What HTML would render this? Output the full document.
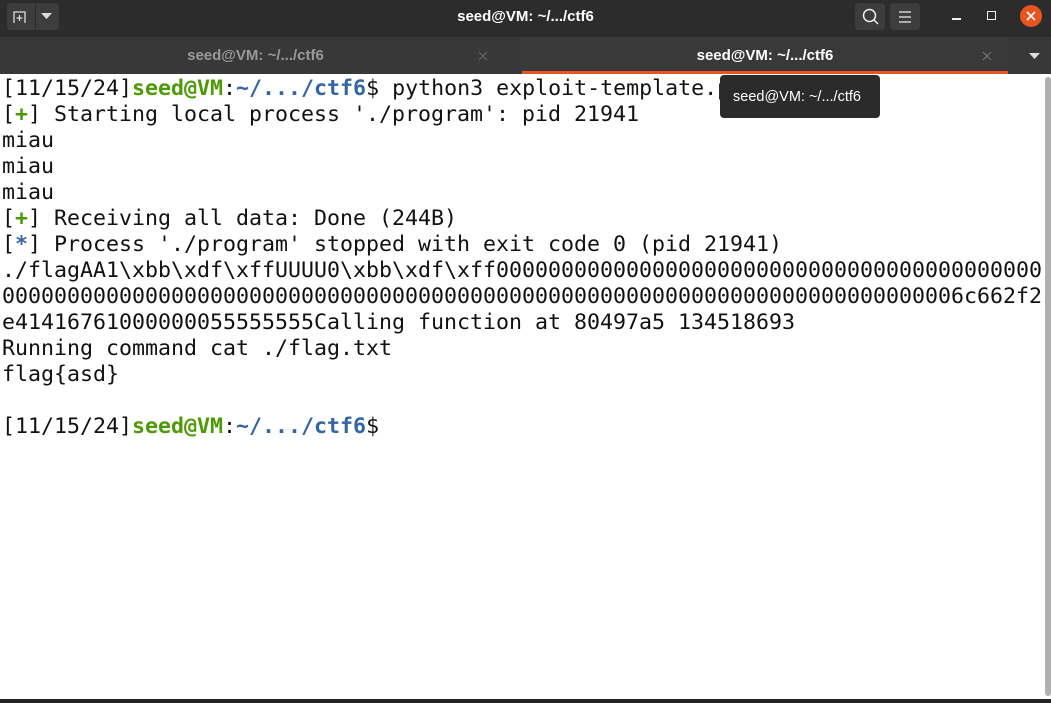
<!DOCTYPE html>
<html><head><meta charset="utf-8"><style>
*{margin:0;padding:0;box-sizing:border-box}
body{width:1051px;height:703px;overflow:hidden;background:#fff;position:relative;font-family:"Liberation Sans",sans-serif}
#title{position:absolute;left:0;top:0;width:1051px;height:37px;background:#2c2c2c}
#tabs{position:absolute;left:0;top:37px;width:1051px;height:37px;background:#383838}
.btn{position:absolute;top:3px;height:27px;background:#3d3d3d;border-radius:4px}
.tt{position:absolute;color:#fff;font-weight:bold;font-size:15px}
#term{position:absolute;left:2px;top:76px;font-family:"DejaVu Sans Mono",monospace;font-size:21.6px;line-height:26px;white-space:pre;color:#111}
.g{color:#4e9a06;font-weight:bold}.b{color:#3465a4;font-weight:bold}
</style></head><body>
<div id="title">
<div class="btn" style="left:7px;width:52px"></div>
<div style="position:absolute;left:35px;top:3px;width:1px;height:27px;background:#2c2c2c"></div>
<svg style="position:absolute;left:12px;top:8px" width="18" height="18"><path d="M2 15V4h11v11" stroke="#ddd" fill="none" stroke-width="1.3"/><path d="M7.5 7v6M4.5 10h6" stroke="#ddd" stroke-width="1.3"/></svg>
<svg style="position:absolute;left:41px;top:12px" width="12" height="8"><path d="M0 1h11L5.5 7z" fill="#ddd"/></svg>
<div class="tt" style="left:0;width:1051px;text-align:center;top:8px">seed@VM: ~/.../ctf6</div>
<div class="btn" style="left:855px;width:30px"></div>
<svg style="position:absolute;left:861px;top:7px" width="20" height="20"><circle cx="8.5" cy="8.5" r="6" stroke="#eee" fill="none" stroke-width="1.5"/><path d="M13 13l4 4" stroke="#eee" stroke-width="1.5"/></svg>
<div class="btn" style="left:890px;width:30px"></div>
<svg style="position:absolute;left:897px;top:9px" width="16" height="16"><path d="M2 3h12M2 8h12M2 13h12" stroke="#eee" stroke-width="1.3"/></svg>
<div style="position:absolute;left:952px;top:18px;width:9px;height:1.5px;background:#eee"></div>
<div style="position:absolute;left:987px;top:11px;width:9px;height:9px;border:1.5px solid #eee"></div>
<div style="position:absolute;left:1020px;top:5px;width:22px;height:22px;border-radius:50%;background:#e95420"></div>
<svg style="position:absolute;left:1025px;top:10px" width="12" height="12"><path d="M2 2l8 8M10 2l-8 8" stroke="#fff" stroke-width="1.6"/></svg>
</div>
<div id="tabs">
<div class="tt" style="left:0;width:511px;text-align:center;top:10px;color:#999">seed@VM: ~/.../ctf6</div>
<svg style="position:absolute;left:478px;top:14px" width="10" height="10"><path d="M1 1l8 8M9 1l-8 8" stroke="#666" stroke-width="1.2"/></svg>
<div style="position:absolute;left:522px;top:0;width:486px;height:37px;background:#393939"></div>
<div class="tt" style="left:522px;width:486px;text-align:center;top:10px">seed@VM: ~/.../ctf6</div>
<svg style="position:absolute;left:982px;top:14px" width="10" height="10"><path d="M1 1l8 8M9 1l-8 8" stroke="#777" stroke-width="1.2"/></svg>
<svg style="position:absolute;left:1029px;top:15px" width="12" height="8"><path d="M0 1h11L5.5 7z" fill="#ddd"/></svg>
<div style="position:absolute;left:522px;top:34px;width:486px;height:3px;background:#e95420"></div>
</div>
<div id="term"><span>[11/15/24]</span><span class="g">seed@VM</span>:<span class="b">~/.../ctf6</span>$ python3 exploit-template.py
[<span class="g">+</span>] Starting local process './program': pid 21941
miau
miau
miau
[<span class="g">+</span>] Receiving all data: Done (244B)
[<span class="b">*</span>] Process './program' stopped with exit code 0 (pid 21941)
./flagAA1\xbb\xdf\xffUUUU0\xbb\xdf\xff000000000000000000000000000000000000000000
00000000000000000000000000000000000000000000000000000000000000000000000006c662f2
e41416761000000055555555Calling function at 80497a5 134518693
Running command cat ./flag.txt
flag{asd}

[11/15/24]<span class="g">seed@VM</span>:<span class="b">~/.../ctf6</span>$</div>
<div style="position:absolute;left:720px;top:75px;width:160px;height:43px;background:#2b2b2b;border-radius:4px;color:#fff;font-size:14.5px;padding:14px 0 0 13px">seed@VM: ~/.../ctf6</div>
<div style="position:absolute;left:1045px;top:77px;width:6px;height:619px;background:#b0b0b0;border-radius:3px"></div>
<div style="position:absolute;left:0;top:699px;width:1051px;height:4px;background:#222"></div>
</body></html>
